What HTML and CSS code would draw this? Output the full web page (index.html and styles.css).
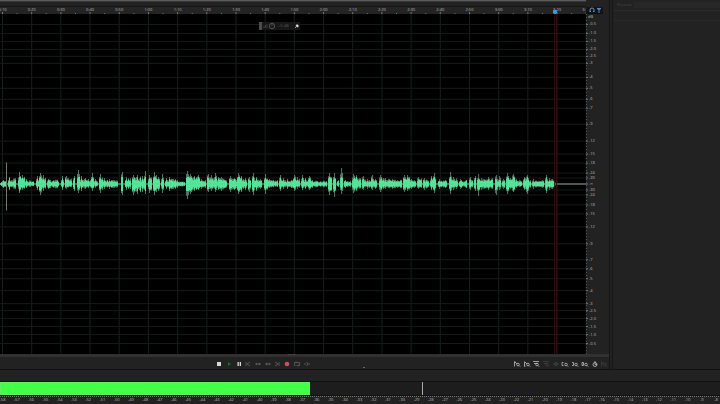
FILE: index.html
```html
<!DOCTYPE html>
<html lang="en">
<head>
<meta charset="utf-8">
<title>Waveform editor</title>
<link rel="stylesheet" href="styles.css">
</head>
<body>
<main class="workspace">
  <section class="editor" aria-label="Waveform editor">
    <div class="overview"></div>
    <div class="overview-end"></div>
    <svg class="ruler" id="ruler"></svg>
    <div class="ruler-tools">
      <button aria-label="Snap"><svg viewBox="0 0 6 6"><path d="M1 5V3a2 2 0 0 1 4 0v2M1 4.500h1M4 4.500h1" class="blue-line"/></svg></button>
      <button aria-label="Marker"><svg viewBox="0 0 6 6"><path d="M1 1h4v1L3.500 3v3h-1V3L1 2z" class="blue-fill"/></svg></button>
    </div>
    <div class="plot">
      <svg class="fill" id="grid"></svg>
      <svg class="fill" viewBox="0 0 586 341" preserveAspectRatio="none">
        <path id="halo" class="halo"/>
        <path id="core" class="core"/>
        <path d="M0 170.500H554" class="centre"/>
        <path d="M554 170.500H586" class="silence"/>
        <path d="M6.500 149V197" class="spike"/>
        <path d="M554.500 0V341M556.500 0V341" class="playline"/>
      </svg>
      <div class="hud">
        <span class="grip"></span>
        <svg class="hud-icons" viewBox="0 0 16 8"><path d="M2 6V4M3.500 6V3M5 6V2" class="dim"/><circle cx="10" cy="4" r="2.700" class="knob"/><path d="M10 1.500V4" class="knob"/></svg>
        <span class="gain">+0 dB</span>
        <button aria-label="Pin"><svg viewBox="0 0 6 6"><path d="M3 1l2 2-1.500 1.500L1.500 3z" class="white-fill"/><path d="M2.500 3.500L1 5" class="bright"/></svg></button>
      </div>
    </div>
    <svg class="axis" id="axis"></svg>
    <div class="scroll"><i></i></div>
    <div class="transport">
      <div class="group play-group">
        <button aria-label="Stop"><svg viewBox="0 0 8 8"><path d="M2 2h4v4H2z" class="white-fill"/></svg></button>
        <button aria-label="Play"><svg viewBox="0 0 8 8"><path d="M3 2l3 2-3 2z" class="play"/></svg></button>
        <button aria-label="Pause"><svg viewBox="0 0 8 8"><path d="M2.500 2h1.300v4H2.500zM4.700 2H6v4H4.700z" class="white-fill"/></svg></button>
        <button aria-label="Previous"><svg viewBox="0 0 8 8"><path d="M2 2v4M6 2L3 4l3 2" class="mid"/></svg></button>
        <button aria-label="Rewind"><svg viewBox="0 0 8 8"><path d="M3 3L1.500 4 3 5M6 3L4.500 4 6 5M2 4h5" class="mid"/></svg></button>
        <button aria-label="Fast forward"><svg viewBox="0 0 8 8"><path d="M2 3l1.500 1L2 5M5 3l1.500 1L5 5M1 4h5" class="mid"/></svg></button>
        <button aria-label="Next"><svg viewBox="0 0 8 8"><path d="M6 2v4M2 2l3 2-3 2" class="mid"/></svg></button>
        <button aria-label="Record"><svg viewBox="0 0 8 8"><circle cx="4" cy="4" r="2.300" class="record"/></svg></button>
        <button aria-label="Loop"><svg viewBox="0 0 8 8"><path d="M2.500 5.500h-1v-3h5v3h-2M5 4.500l-1 1 1 1M3 1.500v1" class="mid"/></svg></button>
        <button aria-label="Skip selection"><svg viewBox="0 0 8 8"><path d="M1 4h2M5 4h2M3.500 2L5 4 3.500 6" class="mid"/></svg></button>
      </div>
      <i class="corner"></i>
      <div class="group zoom-group" id="zooms"></div>
    </div>
  </section>
  <aside class="panel">
    <div class="preset"><label for="preset">Presets:</label><input id="preset" type="text"></div>
    <div class="panel-row"></div>
    <div class="panel-body"></div>
  </aside>
</main>
<section class="levels" aria-label="Levels">
  <div class="levels-head"></div>
  <div class="meter"><div class="level"></div><div class="peak"></div></div>
  <svg class="scale" id="scale"></svg>
</section>
<script src="app.js"></script>
</body>
</html>
```
FILE: styles.css
```css
* { box-sizing: border-box; }
html, body { height: 100%; margin: 0; }
body {
  display: flex;
  flex-direction: column;
  background: #222;
  color: #aaa;
  font: 4px/6px "Open Sans", sans-serif;
  overflow: hidden;
}
button { display: flex; padding: 0; border: 0; background: none; }
svg { display: block; }
svg text { fill: #bbb; font-size: 4px; }
.workspace { flex: 1; display: flex; min-height: 0; border-bottom: 1px solid #121212; }
.editor {
  flex: 1;
  min-width: 0;
  display: grid;
  grid-template-columns: minmax(0, 1fr) 23px;
  grid-template-rows: 7px 7px minmax(0, 1fr) 3px 12px;
}
.overview { border-top: 1px solid #5a5d5c; border-bottom: 1px solid #151515; background: #222; box-shadow: inset 0 1px #363837; }
.ruler { width: 100%; height: 7px; background: #242424; }
.ruler-tools { display: flex; gap: 1px; padding-left: 3px; background: #151515; border-bottom: 1px solid #0c0c0c; width: 17px; }
.ruler-tools svg { width: 6px; height: 6px; }
.blue-line { fill: none; stroke: #5795d3; stroke-width: 1; }
.blue-fill { fill: #4d8bc6; }
.plot { position: relative; background: #000; }
.fill { position: absolute; inset: 0; width: 100%; height: 100%; }
.axis { width: 100%; height: 100%; }
.grid-line { stroke: #171f1a; }
.grid-row { stroke: #171b18; }
.tick { stroke: #777; }
.halo { stroke: #719b82; stroke-opacity: 0.75; fill: none; }
.core { stroke: #52e798; fill: none; }
.centre { stroke: #61d795; }
.silence { stroke: #9b9e9b; }
.spike { stroke: #747970; }
.playline { stroke: #330f0c; }
.head { fill: #4b92dd; }
.hud {
  position: absolute;
  left: 44.2%;
  top: 8px;
  width: 41px;
  height: 8px;
  display: flex;
  align-items: center;
  background: #171717;
}
.grip { width: 3px; height: 8px; background: #4c4c4c; }
.hud-icons { width: 16px; height: 8px; }
.hud .gain { color: #555; flex: 1; }
.hud button svg { width: 6px; height: 6px; }
.dim { fill: none; stroke: #3b3b3b; }
.knob { fill: none; stroke: #686868; stroke-width: 0.7; }
.white-fill { fill: #d8d8d8; }
.bright { fill: none; stroke: #bbb; stroke-width: 0.8; }
.mid { fill: none; stroke: #777; stroke-width: 0.6; }
.faint { fill: none; stroke: #444; stroke-width: 0.7; }
.play { fill: #176d2b; }
.record { fill: #c65260; }
.scroll { grid-column: 1 / -1; background: #313131; display: flex; justify-content: center; }
.scroll i { width: 8px; height: 1px; margin-right: 26px; background: #444; }
.transport { grid-column: 1 / -1; display: flex; align-items: center; padding: 1px 0 0 35.2%; }
.group { display: grid; grid-template-columns: repeat(10, 1fr); width: 97px; justify-items: center; }
.group svg { width: 8px; height: 8px; }
.corner { align-self: flex-end; width: 2px; height: 1px; margin: 0 0 1px 52px; background: #686868; }
.zoom-group { margin-left: auto; }
.panel { width: 15.4%; border-left: 1px solid #151515; box-shadow: inset 2px 0 #222, inset 3px 0 #151515; padding-left: 4px; }
.preset { display: flex; align-items: center; height: 11px; gap: 2px; padding-left: 3px; border-bottom: 1px solid #2a2a2a; color: #4b4b4b; }
.preset input { flex: 1; min-width: 0; height: 6px; padding: 0; border: 0; background: #272727; }
.panel-row { height: 10px; border-bottom: 1px solid #2a2a2a; }
.levels-head { height: 11px; background: #222; }
.meter { display: flex; height: 15px; border-top: 1px solid #121212; border-bottom: 1px solid #121212; background: #1d1d1d; }
.level { width: 43%; background: #42ff48; box-shadow: inset 0 0 0 1px #62ed66; }
.peak { width: 1px; margin-left: 15.6%; background: #aaa; }
.scale { width: 100%; height: 8px; background: #222; }
```
FILE: app.js
```js
const NS = "http://www.w3.org/2000/svg";
function add(parent, tag, attrs, text) {
  const el = document.createElementNS(NS, tag);
  for (const key in attrs) el.setAttribute(key, attrs[key]);
  if (text) el.textContent = text;
  parent.append(el);
}
const byId = id => document.getElementById(id);
const W = 586, H = 341;
const px = x => (x / W * 100) + "%";
const py = y => (y / H * 100) + "%";

// Time ruler and vertical grid, one label every ten seconds.
for (let i = 0; i <= 20; i++) {
  const x = 2.5 + i * 29.18, t = (i + 1) * 10;
  const label = Math.floor(t / 60) + ":" + String(t % 60).padStart(2, "0");
  add(byId("ruler"), "text", { x: px(x), y: 4, "text-anchor": "middle" }, label);
  add(byId("ruler"), "line", { x1: px(x), x2: px(x), y1: 5, y2: 7, class: "tick" });
  add(byId("ruler"), "line", { x1: px(x + 14.6), x2: px(x + 14.6), y1: 6, y2: 7, class: "tick" });
  add(byId("grid"), "line", { x1: px(x), x2: px(x), y1: 0, y2: "100%", class: "grid-line" });
}
add(byId("ruler"), "path", { d: "M553 3h4v3l-1 1h-2l-1-1z", class: "head" });

// Decibel axis and horizontal grid.
const marks = [["-0.5",24],["-1.0",33],["-1.5",41],["-2.0",49],["-2.5",56],["-3",63],["-4",77],["-5",88],["-6",99],["-7",108],["-9",124],["-12",141],["-15",154],["-18",163],["-24",173],["-30",178],["-∞",184],["-30",190],["-24",195],["-18",205],["-15",214],["-12",227],["-9",244],["-7",260],["-6",269],["-5",279],["-4",291],["-3",304],["-2.5",311],["-2.0",319],["-1.5",327],["-1.0",335],["-0.5",344]];
add(byId("axis"), "text", { x: 2, y: py(4.5) }, "dB");
for (const [label, y] of marks) {
  const at = py(y - 13.5);
  add(byId("axis"), "text", { x: 3, y: at, dy: 1 }, label);
  add(byId("axis"), "line", { x1: 0, x2: 2, y1: at, y2: at, class: "tick" });
  add(byId("grid"), "line", { x1: 0, x2: "100%", y1: at, y2: at, class: "grid-row" });
}
add(byId("axis"), "line", { x1: 0.5, x2: 0.5, y1: 0, y2: "100%", class: "tick", "stroke-dasharray": "1 2", "stroke-opacity": 0.6 });

// Bursts of speech: start, end, height above and below the centre line.
const bursts = [[0,1,2,2],[2,6,4,4],[8,15,7,6],[18,20,12,9],[21,24,9,6],[25,33,5,4],[36,38,8,6],[39,41,11,11],[42,45,9,7],[47,58,5,5],[61,63,8,6],[65,71,8,5],[73,74,8,7],[77,79,14,9],[80,84,8,7],[84,91,6,5],[91,93,11,7],[94,97,5,4],[99,102,10,9],[103,107,6,5],[108,117,5,5],[121,122,12,11],[125,130,7,6],[132,135,9,11],[136,140,9,10],[141,143,8,8],[144,145,13,10],[148,151,9,9],[153,156,12,11],[157,159,7,7],[161,163,10,9],[165,167,6,5],[168,175,7,7],[176,184,4,4],[186,188,13,15],[189,192,10,10],[193,196,8,7],[197,199,9,6],[200,205,5,5],[207,209,10,8],[210,213,9,7],[214,216,11,8],[217,219,7,6],[220,226,7,7],[229,236,8,8],[237,239,11,10],[240,243,8,8],[244,246,6,6],[248,250,7,8],[252,254,11,11],[255,258,7,7],[259,261,5,5],[264,267,10,10],[268,277,5,4],[279,281,9,7],[282,285,6,5],[286,292,5,5],[293,295,9,7],[296,299,7,5],[301,303,9,6],[304,307,6,5],[308,310,8,6],[311,326,4,4],[328,331,11,11],[333,335,11,13],[337,338,4,3],[340,342,16,10],[344,350,4,4],[352,354,10,9],[355,360,9,7],[362,365,8,6],[366,370,5,5],[371,373,9,6],[374,376,5,5],[379,381,9,8],[382,383,6,5],[384,390,6,5],[391,401,5,5],[403,405,9,8],[406,409,9,7],[410,415,5,5],[417,421,7,5],[423,428,6,6],[430,432,8,6],[433,435,11,9],[438,446,5,5],[449,451,12,10],[452,457,7,6],[459,466,5,5],[469,472,7,6],[474,475,8,7],[477,479,10,12],[480,486,6,6],[487,492,7,6],[495,497,9,11],[498,500,8,6],[502,504,5,5],[506,508,11,10],[509,511,6,5],[512,514,10,8],[515,521,5,4],[523,526,7,6],[526,528,9,10],[529,530,4,4],[532,543,5,5],[545,547,9,9],[548,554,6,6]];
let seed = 17;
const rand = () => (seed = (seed * 16807) % 2147483647) / 2147483647;
let halo = "", core = "";
for (const [from, to, up, down] of bursts) {
  for (let x = from; x <= to; x++) {
    const k = x === from + 1 || from === to ? 1 : 0.5 + rand() * 0.35;
    const c = 0.5 + rand() * 0.35;
    halo += `M${x + 0.5} ${170.5 - up * k}V${170.5 + down * k}`;
    core += `M${x + 0.5} ${170.5 - Math.min(up * k * c, 7)}V${170.5 + Math.min(down * k * c, 7)}`;
  }
}
byId("halo").setAttribute("d", halo);
byId("core").setAttribute("d", core);

// Level scale in decibels.
for (let i = 0; i <= 50; i++) {
  const x = (2.5 + i * 14.27) / 7.2;
  add(byId("scale"), "text", { x: x + "%", y: 5, "text-anchor": "middle" }, String(i - 58));
}
add(byId("scale"), "line", { x1: 0, x2: "100%", y1: 0.5, y2: 0.5, class: "tick", "stroke-dasharray": "1 1" });

// Zoom buttons.
const lens = '<circle cx="5" cy="4.500" r="1.300"/><path d="M6 5.500l1.200 1.200"/>';
const zooms = [
  ["Zoom in amplitude", "bright", '<path d="M1.500 1.500v5M1 2h1.500M2 2l2 2"/>' + lens],
  ["Zoom out amplitude", "bright", '<path d="M1.500 1.500v5M1 6h1.500M2 2l2 2"/>' + lens],
  ["Zoom reset amplitude", "bright", '<path d="M1 1.500h6M2 3.500h4"/>' + lens],
  ["Zoom in time", "faint", '<path d="M1 1.500h6M2 3.500h4"/>' + lens],
  ["Zoom out time", "faint", '<path d="M1 4h6M4 2v4"/>' + '<circle cx="4" cy="4" r="1.500"/>'],
  ["Zoom to in point", "bright", '<path d="M2.500 2.500H1v3h1.500"/>' + lens],
  ["Zoom to out point", "bright", '<path d="M1 2.500h1.500v3H1"/>' + lens],
  ["Zoom to selection", "bright", '<path d="M1 2.500v3h1.500v-3z"/>' + lens],
  ["Zoom to time", "bright", '<circle cx="4" cy="4.500" r="2"/><path d="M4 1v3.500h2"/>'],
  ["Zoom out full", "faint", '<path d="M1.500 1.500v5M2 4l2-2"/>' + lens]
];
byId("zooms").innerHTML = zooms.map(([name, tone, art]) =>
  `<button aria-label="${name}"><svg viewBox="0 0 8 8" class="${tone}">${art}</svg></button>`).join("");
```
